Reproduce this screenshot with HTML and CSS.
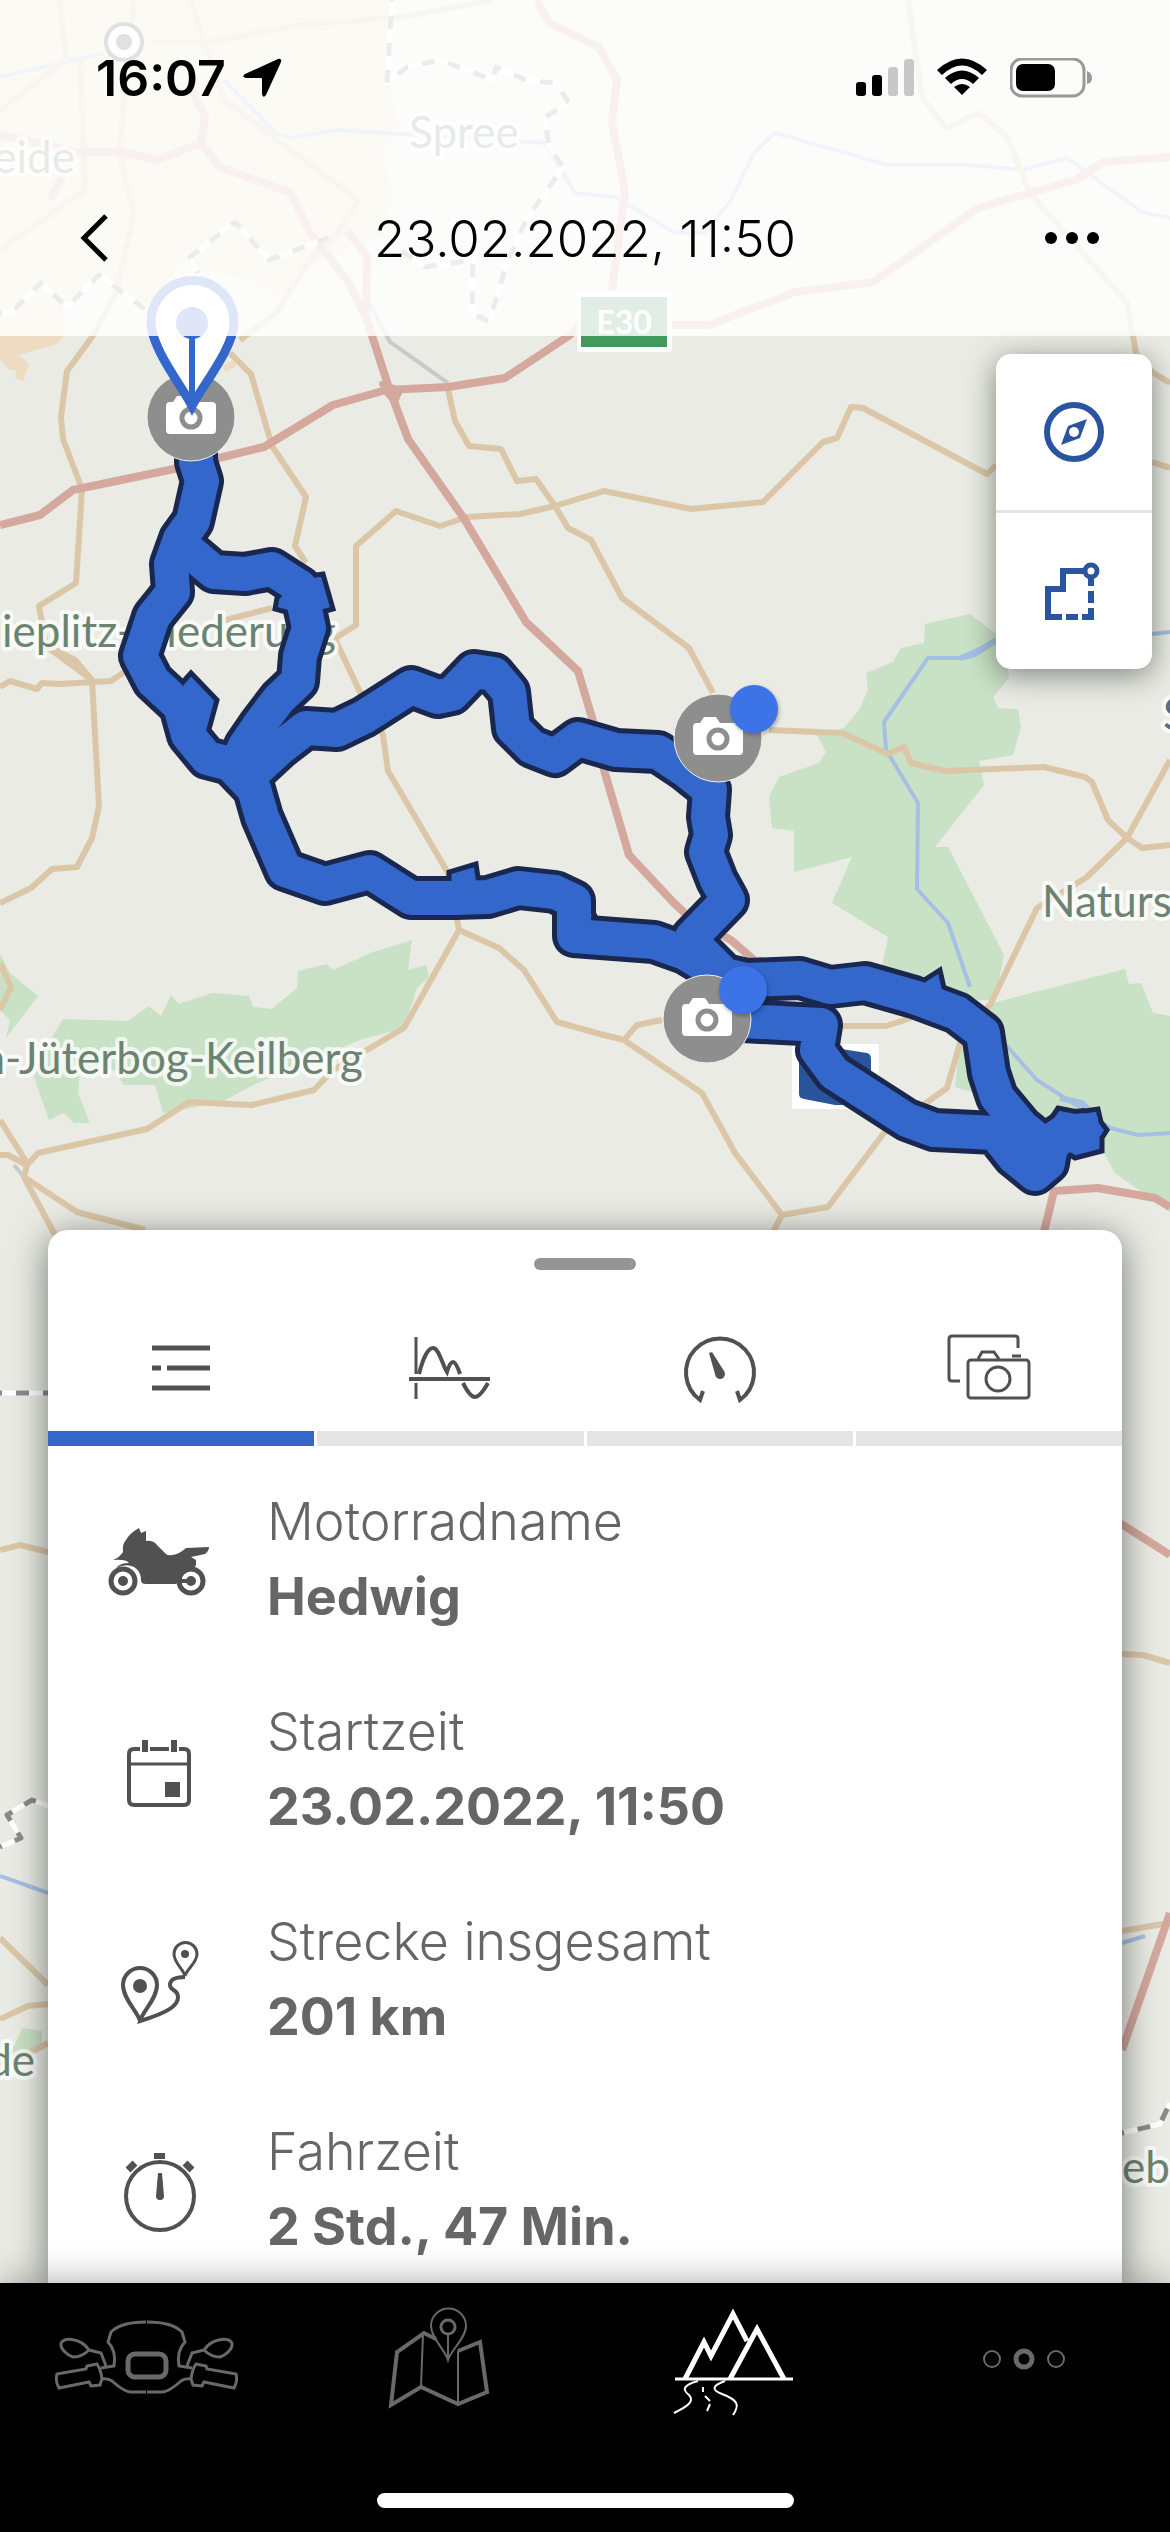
FILE: index.html
```html
<!DOCTYPE html>
<html lang="de">
<head>
    <meta charset="UTF-8">
    <meta name="viewport" content="width=device-width, initial-scale=1.0">
    <title>23.02.2022, 11:50</title>
    <link rel="stylesheet" href="styles.css">
</head>
<body>
    <div class="screen">
        <!-- map with recorded route -->
        <svg class="map" viewBox="0 0 1170 2532" preserveAspectRatio="xMidYMin slice" role="img" aria-label="Karte">
            <defs>
                <g id="photoPin">
                    <circle r="44" class="pin-circle"/>
                    <path d="M-21-15H-18L-14-21H-2L2-15H21Q25-15 25-11V13Q25 17 21 17H-21Q-25 17-25 13V-11Q-25-15-21-15Z" fill="#fff"/>
                    <circle cy="1" r="9" fill="#fff" stroke="#8e8e8e" stroke-width="5"/>
                </g>
                <g id="routeLines">
                    <path d="M196 440V462L202 481 197 503 193 521 180 539 171 564 173 592 153 617 140 656 153 681 180 706 188 735 207 758 230 764 254 789 262 817 285 870 325 884 370 872 411 898 455 898 488 897 518 888 555 892 574 901V936L654 942 685 953 708 967"/>
                    <path d="M182 545L214 572 245 574 272 569 300 587 306 614 309 628 300 656 298 681 279 699 260 724 245 746 237 764"/>
                    <path d="M254 772L280 748 306 728 337 730 364 717 411 687 438 697 452 694 474 671 494 674 509 692 513 728 532 747 555 756 578 739 616 750 658 752 685 770 710 790 708 817 711 835 706 852 717 880 728 900 692 937 708 967"/>
                    <path d="M700 950L725 975 746 980 800 978 830 987 865 983 914 997 957 1013 983 1033 989 1073 997 1097 1022 1127 1044 1145"/>
                    <path d="M707 1019L761 1022 821 1025 817 1050 834 1073 907 1120 934 1130 995 1133 1014 1157 1035 1174 1048 1163 1052 1140 1064 1132 1087 1130"/>
                </g>
            </defs>

            <rect width="1170" height="2532" fill="#e9ebe4"/>
            <path fill="#eddcc2" d="M0 0H394L388 80 400 130 380 150 392 190 385 235 300 270 290 300 250 280 180 265 146 310 99 275 63 310V336L57 344 19 355 29 364 23 381 15 378 17 371 8 369 0 360ZM222 366L226 372 236 366 234 360Z"/>

            <g fill="#c9e1c5">
                <path d="M970 614L925 624 924 643 901 648 893 662 866 673 868 690 859 710 844 728 817 735 826 752 819 763 779 777 769 797 772 828 794 831V872L852 857 832 903 888 937 882 967 960 1000H995L1004 955 948 847H935L984 785 979 761 1013 755 1021 727 1018 709 998 708 993 697 1009 678 1004 640Z"/>
                <path d="M993 1003L1125 969 1129 984 1141 983 1153 1013 1170 1016V1212L1115 1173 1104 1153 1029 1120 976 1093 955 1087 960 1040Z"/>
                <path d="M63 1019L128 1021 149 1006 161 1016 171 995 179 1004 212 993 249 996 253 1007 272 1009 297 988 298 971 327 964 333 970 373 952 412 940 408 970 426 965 429 977 417 988 404 1028 360 1040 253 1085 222 1102 163 1113 155 1085H124L115 1070H80L78 1093 90 1123H74L64 1113 49 1120 34 1077 52 1037Z"/>
                <path d="M0 954L10 973 38 996 6 1038 10 1020 0 1010ZM22 2028L42 2031V2050L0 2065 15 2045Z"/>
            </g>

            <g class="water">
                <path d="M0 77L104 53M224 80L276 133 291 138 336 130 545 143 575 193 616 197 675 233 705 233 731 200 754 153 775 133 888 165 970 165 1022 170 1067 158 1142 212 1170 218"/>
                <path d="M1170 632L1152 634 996 641 960 658H928L884 722 886 750 918 803 917 889 948 923 970 987M1004 1043L1037 1080 1079 1107 1110 1128 1138 1135 1170 1133M0 1876L48 1893M1122 1943L1145 1936"/>
                <path d="M1060 1098L1082 1103 1094 1115M960 658L975 654 996 640" stroke-width="6"/>
            </g>

            <path d="M369 303L390 342 448 383M14 1165L24 1177" fill="none" stroke="#c9c9cd" stroke-width="4"/>

            <g class="road">
                <path d="M134 0L119 152 134 213 116 293 92 337 67 371 61 417 63 439 82 489 76 583 39 606 46 646 92 680 99 806 92 838 77 867 52 869 31 888 0 903"/>
                <path d="M0 687L10 681 37 689 42 683 59 684 111 681 126 671M55 650L75 660 92 680"/>
                <path d="M230 353L251 374 272 446 306 497 295 546 306 563M333 635L360 692 383 735 388 771 417 820 448 873 459 930 404 1028 333 1070 314 1090 252 1105 189 1102 147 1129 38 1153 27 1165 24 1177 77 1212 145 1230"/>
                <path d="M459 930L499 948 524 970 557 1022 600 1034 624 1040 702 1093 735 1153 782 1215 773 1232M782 1215L828 1207 884 1133 947 1088 960 1043 991 1003 1037 908 1087 877 1127 838 1170 760"/>
                <path d="M1170 845L1142 848 1127 838 1108 820 1092 782 1085 777 1044 767 945 771 911 763 904 747 888 754 842 733 769 730M624 1040L637 1025 662 1020M842 1026H886L911 1018"/>
                <path d="M448 389L455 421 469 446 501 449 517 481 536 479 555 506 568 528 591 540 622 598 689 648 713 693"/>
                <path d="M222 621L272 608M331 641L356 625V546L396 511 440 526 467 517 520 514 555 506 604 491 691 509 763 502 823 442 837 438 851 407 863 408 987 474 996 465M1152 462L1170 468"/>
                <path d="M908 0L922 97 946 128 979 113 1007 137 1030 193 1127 303 1136 353 1152 372 1170 383"/>
                <path d="M0 963L11 987 0 1010M0 1120L27 1163M0 1155H8L27 1165M24 1177L55 1235"/>
                <path d="M153 43L209 42 299 25 403 17 493 0M190 0L224 100 358 200 340 230 310 260 276 313 240 340M60 0L66 60 0 110M80 60L85 190 0 250"/>
                <path d="M0 1550L20 1545 48 1552M0 1938L48 1985M0 2019L28 2006 48 2004M20 2058L48 2043M1122 1654L1143 1655 1170 1663M1122 1931L1163 1924"/>
            </g>

            <g class="motorway">
                <path d="M0 525L40 515 73 490 174 469 264 447 333 405 386 390 448 387 505 378 570 335 580 325H709L795 292 873 282 978 208 1075 180 1104 162 1170 157"/>
                <path d="M537 0L549 23 599 47 617 80 612 122 625 192 612 290M190 87L205 117 201 143 157 160 123 152H75M0 135L75 152 50 200M201 143L220 167 291 193 310 233 347 280 366 317 388 385 408 439 463 517 526 622 578 671 593 721 604 770 629 855 673 902 689 917 731 940 754 960M347 230L367 257 366 317"/>
                <path d="M1044 1232L1054 1191 1098 1188 1155 1198 1170 1207M1115 1520L1170 1555M1122 2050L1170 1913"/>
                <path d="M382 384L386 392 395 402 400 390Z" stroke-width="6" fill="#d4a89d"/>
            </g>

            <g class="border-base">
                <path id="borders" d="M392 0L387 83 407 67 440 60 493 80 496 67 526 80 556 83 569 103 545 117 549 147 563 167 526 220 507 263 489 322 472 313 473 260 425 267 400 250M0 313H11L41 283 67 307 99 275 146 310M198 273L190 257 235 222 269 260 328 238M0 1393H48M0 1847L21 1838 7 1815 32 1800 48 1806M1122 2133L1160 2124 1170 2103"/>
            </g>
            <use href="#borders" class="border-dash"/>

            <circle cx="124" cy="42" r="18" fill="#fff" stroke="#444" stroke-width="4"/>
            <circle cx="124" cy="42" r="8" fill="#444"/>

            <g class="map-label">
                <text x="75" y="173" text-anchor="end">eide</text>
                <text x="409" y="148" fill="#6b7b91">Spree</text>
                <text x="2" y="647">ieplitz-Niederung</text>
                <text x="363" y="1074" text-anchor="end">a-Jüterbog-Keilberg</text>
                <text x="1042" y="917">Naturs</text>
                <text x="1163" y="730" fill="#5b6b88">S</text>
                <text x="35" y="2076" text-anchor="end">de</text>
                <text x="1122" y="2183">eb</text>
            </g>

            <rect x="577" y="291" width="95" height="61" rx="2" fill="#fff"/>
            <rect x="581" y="297" width="86" height="50" fill="#43985d"/>
            <text x="624" y="334" class="road-sign">E30</text>
            <rect x="792" y="1044" width="87" height="65" rx="2" fill="#fff"/>
            <path d="M799 1048H835L867 1053Q871 1054 871 1059V1105H835L804 1099Q799 1098 799 1094Z" fill="#2a549c"/>

            <use href="#routeLines" class="route-casing"/>
            <g class="route-bumps">
                <path d="M449 890V872L476 864 479 884 470 900Z"/>
                <path d="M468 680L466 666 483 658 492 655 508 668 504 684Z"/>
                <path d="M561 895L585 898 595 916 585 925 565 920Z"/>
                <path d="M296 578L323 574 333 609 322 612 300 616 275 609 277 598Z"/>
                <path d="M181 684L191 673 217 700 208 733 190 730Z"/>
                <path d="M1040 1135L1058 1108 1078 1112 1098 1109 1101 1122 1107 1130 1102 1138 1102 1151 1075 1158Z"/>
                <path d="M918 984L940 970 944 988 970 1000 985 1012 965 1025Z"/>
            </g>
            <use href="#routeLines" class="route-line"/>
            <path d="M1015 1115L1044 1138 1064 1117 1098 1117 1099 1145 1068 1153 1056 1178 1035 1188 1012 1145Z" fill="#3367cc"/>

            <use href="#photoPin" x="191" y="417"/>
            <use href="#photoPin" x="718" y="738"/>
            <circle cx="754" cy="709" r="24" class="pin-badge"/>
            <use href="#photoPin" x="707" y="1019"/>
            <circle cx="743" cy="990" r="24" class="pin-badge"/>

            <!-- start marker -->
            <path d="M192 406C182 386 151 348 151 322A41 41 0 0 1 234 322C234 348 202 386 192 406Z" fill="#fff" stroke="#3367cc" stroke-width="9"/>
            <circle cx="192" cy="323" r="16" fill="#3367cc"/>
            <path d="M192 330V402" stroke="#3367cc" stroke-width="6"/>
        </svg>

        <header class="header">
            <div class="status-bar">
                <div class="clock">
                    <span>16:07</span>
                    <svg width="40" height="40" viewBox="0 0 40 40" aria-hidden="true"><path d="M36 1Q40 0 39 4L24 37Q21 41 20 36V21Q20 20 19 20H4Q-1 19 3 16Z"/></svg>
                </div>
                <div class="status-icons">
                    <svg width="58" height="40" viewBox="0 0 58 40" aria-hidden="true">
                        <rect x="0" y="24" width="10" height="14" rx="3"/><rect x="16" y="17" width="10" height="21" rx="3"/>
                        <rect x="32" y="9" width="10" height="29" rx="3" fill="#c8c8c8"/><rect x="48" y="1" width="10" height="37" rx="3" fill="#c8c8c8"/>
                    </svg>
                    <svg width="50" height="40" viewBox="0 0 50 40" aria-hidden="true">
                        <path d="M0 12Q25-11 50 12L45 17Q25-2 5 17ZM8 20Q25 5 42 20L36 26Q25 16 14 26ZM17 29Q25 23 33 29L25 37Z"/>
                    </svg>
                    <svg width="82" height="40" viewBox="0 0 82 40" aria-hidden="true">
                        <rect x="1" y="1" width="73" height="37" rx="11" fill="none" stroke="#999" stroke-width="3"/>
                        <rect x="6" y="6" width="39" height="27" rx="7"/>
                        <path d="M77 13Q82 15 82 20T77 26Z" fill="#999"/>
                    </svg>
                </div>
            </div>
            <div class="title-bar">
                <button class="icon-button" aria-label="Zurück">
                    <svg width="54" height="54" viewBox="0 0 54 54" aria-hidden="true"><path d="M35 5L13 27 35 49" fill="none" stroke="#000" stroke-width="5"/></svg>
                </button>
                <h1>23.02.2022, 11:50</h1>
                <button class="icon-button" aria-label="Mehr">
                    <svg width="54" height="54" viewBox="0 0 54 54" aria-hidden="true"><circle cx="6" cy="27" r="6"/><circle cx="27" cy="27" r="6"/><circle cx="48" cy="27" r="6"/></svg>
                </button>
            </div>
        </header>

        <div class="map-tools">
            <button aria-label="Kompass">
                <svg width="80" height="80" viewBox="0 0 80 80" aria-hidden="true">
                    <circle cx="40" cy="40" r="27" fill="none" stroke="#2a54a0" stroke-width="6"/>
                    <path d="M53 27L46 46 27 53 34 34Z" fill="#2a54a0"/><circle cx="40" cy="40" r="5" fill="#fff"/>
                </svg>
            </button>
            <button aria-label="Route anzeigen">
                <svg width="80" height="80" viewBox="0 0 80 80" fill="none" stroke="#2a54a0" stroke-width="6" aria-hidden="true">
                    <path d="M28 66H14V38H29V20H51M57 27V35M57 40V52M32 66H44M48 66H57V57"/><circle cx="57" cy="20" r="6" stroke-width="5"/>
                </svg>
            </button>
        </div>

        <main class="panel">
            <div class="handle"></div>
            <div class="tabs" role="tablist">
                <button class="tab active" role="tab" aria-selected="true" aria-label="Details">
                    <svg width="90" height="80" viewBox="0 0 90 80" stroke-width="5" aria-hidden="true"><path d="M16 20H74M16 40H25M31 40H74M16 60H74"/></svg>
                </button>
                <button class="tab" role="tab" aria-selected="false" aria-label="Höhenprofil">
                    <svg width="90" height="80" viewBox="0 0 90 80" stroke-width="4" aria-hidden="true"><path d="M11 9V46M11 55V71" stroke-width="3"/><path d="M4 51H85M14 46C18 30 23 20 28 20 34 20 37 36 42 44Q45 34 48 34T55 46M58 55Q65 69 70 69T83 55"/></svg>
                </button>
                <button class="tab" role="tab" aria-selected="false" aria-label="Geschwindigkeit">
                    <svg width="90" height="80" viewBox="0 0 90 80" stroke-width="4" aria-hidden="true"><path d="M28 63L25 72A34 34 0 1 1 65 72L62 63"/><path d="M34 25L37 24 49 43A5 5 0 1 1 40 46Z" fill="#515151" stroke="none"/></svg>
                </button>
                <button class="tab" role="tab" aria-selected="false" aria-label="Fotos">
                    <svg width="90" height="80" viewBox="0 0 90 80" stroke-width="3" aria-hidden="true"><path d="M16 53H8Q5 53 5 50V11Q5 8 8 8H71Q74 8 74 11V20M34 31L38 24H50L55 31M68 28H77"/><rect x="24" y="32" width="61" height="38" rx="3"/><circle cx="54" cy="51" r="12"/></svg>
                </button>
            </div>
            <dl class="details">
                <div class="row">
                    <svg width="126" height="100" viewBox="0 0 126 100" aria-hidden="true">
                        <g fill="none" stroke="#515151" stroke-width="5"><circle cx="27" cy="72" r="12"/><circle cx="95" cy="72" r="12"/></g>
                        <g fill="#515151"><circle cx="27" cy="72" r="5"/><circle cx="95" cy="72" r="5"/>
                        <path d="M17 51Q24 48 27 43 26 35 30 31 34 24 43 19L45 24 50 22 50 32Q57 31 61 36L70 45Q72 47 76 46 82 46 90 39L113 38Q113 42 109 45L95 48 100 51V56L98 59Q84 58 82 70H93V74H81L80 75H50Q45 75 45 71 45 62 38 58 30 54 20 59 24 54 33 54 30 50 17 51Z"/></g>
                    </svg>
                    <div><dt>Motorradname</dt><dd>Hedwig</dd></div>
                </div>
                <div class="row">
                    <svg width="126" height="100" viewBox="0 0 126 100" fill="none" stroke="#515151" stroke-width="4" aria-hidden="true">
                        <path d="M44 30H38Q33 30 33 35V81Q33 86 38 86H88Q93 86 93 81V35Q93 30 88 30H83M54 30H73"/><path d="M33 45H93" stroke-width="3"/><path d="M49 21V33M78 21V33" stroke-width="6"/>
                        <rect x="69" y="63" width="15" height="15" fill="#515151" stroke="none"/>
                    </svg>
                    <div><dt>Startzeit</dt><dd>23.02.2022, 11:50</dd></div>
                </div>
                <div class="row">
                    <svg width="126" height="100" viewBox="0 0 126 100" fill="none" stroke="#515151" stroke-width="4" aria-hidden="true">
                        <path d="M44 92C42 83 27 70 27 56A17 17 0 0 1 61 56C61 70 46 83 44 92 74 83 82 76 82 68S74 62 74 56 80 48 89 48"/>
                        <path d="M89 47C88 41 78 34 78 25A11 11 0 0 1 101 25C101 34 90 41 89 47Z" stroke-width="3"/>
                        <g fill="#515151" stroke="none"><circle cx="44" cy="57" r="7"/><circle cx="89" cy="25" r="4"/></g>
                    </svg>
                    <div><dt>Strecke insgesamt</dt><dd>201 km</dd></div>
                </div>
                <div class="row">
                    <svg width="126" height="100" viewBox="0 0 126 100" fill="none" stroke="#515151" aria-hidden="true">
                        <circle cx="64" cy="57" r="34" stroke-width="4"/><path d="M58 17H69" stroke-width="6"/><path d="M32 31L39 24M96 31L89 24" stroke-width="7"/>
                        <path d="M62 34H66L68 57A4 4 0 1 1 60 57Z" fill="#515151" stroke="none"/>
                    </svg>
                    <div><dt>Fahrzeit</dt><dd>2 Std., 47 Min.</dd></div>
                </div>
            </dl>
        </main>

        <nav class="bottom-nav">
            <div class="nav-items">
                <a href="#" aria-label="Cockpit">
                    <svg width="190" height="120" viewBox="0 0 190 120" stroke-width="3" aria-hidden="true">
                        <defs><g id="handlebar">
                            <path d="M95 22C78 22 66 26 60 32L57 42C62 47 65 54 63 66L50 68"/>
                            <path d="M38 50C30 38 14 37 10 43 9 49 16 55 22 57 30 57 34 54 38 50L50 53 55 66M6 74L35 69 36 66 46 64Q50 70 51 79L49 85 40 86 38 82 8 88Q4 81 6 74ZM51 79Q57 78 61 81C70 89 76 92 80 92H95"/>
                        </g></defs>
                        <use href="#handlebar"/><use href="#handlebar" transform="translate(191 0) scale(-1 1)"/>
                        <rect x="77" y="54" width="38" height="23" rx="7" stroke-width="5"/>
                    </svg>
                </a>
                <a href="#" aria-label="Karte">
                    <svg width="190" height="120" viewBox="0 0 190 120" stroke-width="4" aria-hidden="true">
                        <path d="M92 39L80 33 53 52 47 105 77 87 114 104 143 92 136 42 114 51"/>
                        <path d="M79 34L77 87M114 51V104M104 60C101 50 87 38 87 26A17 17 0 0 1 122 26C122 38 107 50 104 60ZM104 34V58" stroke-width="2"/><circle cx="104" cy="27" r="7" stroke-width="3"/>
                    </svg>
                </a>
                <a href="#" class="active" aria-label="Touren" aria-current="page">
                    <svg width="190" height="120" viewBox="0 0 190 120" aria-hidden="true">
                        <path d="M49 79L68 42 75 56 97 14 111 41M94 79L121 29 148 79" stroke-width="5"/><path d="M39 79H157" stroke-width="3"/>
                        <path d="M62 81C44 86 48 91 53 95 60 102 48 108 38 113M89 81C75 86 76 90 86 94 102 100 104 105 97 115M67 87V92M69 96L74 101M74 104L71 111" stroke-width="2"/>
                    </svg>
                </a>
                <a href="#" aria-label="Mehr">
                    <svg width="190" height="120" viewBox="0 0 190 120" aria-hidden="true"><g stroke-width="2"><circle cx="63" cy="59" r="8"/><circle cx="127" cy="59" r="8"/></g><circle cx="95" cy="59" r="8" stroke-width="5"/></svg>
                </a>
            </div>
            <div class="home-indicator"></div>
        </nav>
    </div>
</body>
</html>
```
FILE: styles.css
```css
* {
    box-sizing: border-box;
}

body {
    margin: 0;
    font-family: Inter, "Liberation Sans", sans-serif;
    background: #e9ebe4;
}

button {
    border: none;
    padding: 0;
    background: transparent;
    cursor: pointer;
}

svg {
    display: block;
}

.screen {
    position: relative;
    display: flex;
    flex-direction: column;
    min-height: 100vh;
    overflow: hidden;
}

/* Map */
.map {
    position: absolute;
    top: 0;
    left: 0;
    width: 100%;
    height: 100%;
}

.road,
.motorway,
.water,
.border-base,
.border-dash,
.route-casing,
.route-line {
    fill: none;
    stroke-linejoin: round;
}

.road {
    stroke: #dbc7a8;
    stroke-width: 6;
}

.motorway {
    stroke: #d4a89d;
    stroke-width: 8;
}

.water {
    stroke: #a6c0e4;
    stroke-width: 4;
}

.border-base {
    stroke: #fff;
    stroke-width: 5;
}

.border-dash {
    stroke: #8a8a8a;
    stroke-width: 5;
    stroke-dasharray: 13 14;
    stroke-dashoffset: -16;
}

.route-casing {
    stroke: #1a2850;
    stroke-width: 44;
}

.route-bumps {
    fill: #3367cc;
    stroke: #1a2850;
    stroke-width: 5;
}

.route-line {
    stroke: #3367cc;
    stroke-width: 34;
}

.pin-circle {
    fill: #8e8e8e;
    stroke: #f0f0f0;
    stroke-width: 1;
}

.pin-badge {
    fill: #3c74e8;
    filter: drop-shadow(1px 2px 2px rgba(0, 0, 0, 0.3));
}

.map-label {
    font-family: Lato, "Open Sans", sans-serif;
    font-size: 44px;
    fill: #6b8471;
    stroke: rgba(255, 255, 255, 0.75);
    stroke-width: 8px;
    stroke-linejoin: round;
    paint-order: stroke;
}

.road-sign {
    font-family: Lato, "Open Sans", sans-serif;
    font-size: 32px;
    font-weight: bold;
    fill: #fff;
    text-anchor: middle;
}

/* Header */
.header {
    position: relative;
    padding-bottom: 16px;
    background: rgba(255, 255, 255, 0.84);
}

.status-bar {
    display: flex;
    justify-content: space-between;
    align-items: center;
    height: 156px;
    padding: 0 78px 0 96px;
}

.clock {
    display: flex;
    align-items: center;
    gap: 16px;
    font-size: 50px;
    font-weight: 600;
}

.status-icons {
    display: flex;
    align-items: center;
    gap: 23px;
}

.title-bar {
    display: flex;
    justify-content: space-between;
    align-items: center;
    height: 164px;
    padding: 0 71px;
}

.title-bar h1 {
    margin: 0;
    font-size: 51px;
    font-weight: 300;
}

/* Map buttons */
.map-tools {
    position: relative;
    align-self: flex-end;
    width: 156px;
    margin: 18px 18px 0 0;
    border-radius: 15px;
    background: #fff;
    box-shadow: 0 6px 30px rgba(0, 0, 0, 0.45);
}

.map-tools button {
    display: flex;
    align-items: center;
    justify-content: center;
    width: 100%;
    height: 156px;
}

.map-tools button + button {
    height: 159px;
    border-top: 3px solid #e4e4e4;
}

/* Bottom sheet */
.panel {
    position: relative;
    margin: auto 48px 0;
    padding-top: 28px;
    border-radius: 20px 20px 0 0;
    background: #fff;
    box-shadow: 0 6px 36px rgba(0, 0, 0, 0.5);
}

.handle {
    width: 102px;
    height: 12px;
    margin: 0 auto;
    border-radius: 6px;
    background: #959595;
}

.tabs {
    display: grid;
    grid-template-columns: repeat(4, 1fr);
    gap: 3px;
}

.tab {
    display: flex;
    justify-content: center;
    padding: 58px 0 23px;
    border-bottom: 15px solid #e5e5e5;
}

.tab.active {
    border-bottom-color: #3367cc;
}

.tab svg {
    fill: none;
    stroke: #515151;
}

.details {
    display: flex;
    flex-direction: column;
    gap: 60px;
    margin: 0;
    padding: 38px 48px 19px;
    color: #666;
    font-size: 52px;
    line-height: 75px;
}

.row {
    display: flex;
    align-items: center;
    gap: 45px;
}

.row dt {
    font-weight: 300;
}

.row dd {
    margin: 0;
    font-weight: 700;
}

/* Bottom navigation */
.bottom-nav {
    position: relative;
    padding: 17px 0 24px;
    background: #000;
    box-shadow: 0 0 36px rgba(0, 0, 0, 0.35);
}

.nav-items {
    display: grid;
    grid-template-columns: repeat(4, 1fr);
}

.nav-items a {
    display: flex;
    justify-content: center;
    color: #696969;
}

.nav-items a.active {
    color: #fff;
}

.nav-items svg {
    fill: none;
    stroke: currentColor;
}

.home-indicator {
    width: 417px;
    height: 15px;
    margin: 73px auto 0;
    border-radius: 8px;
    background: #fff;
}
```
